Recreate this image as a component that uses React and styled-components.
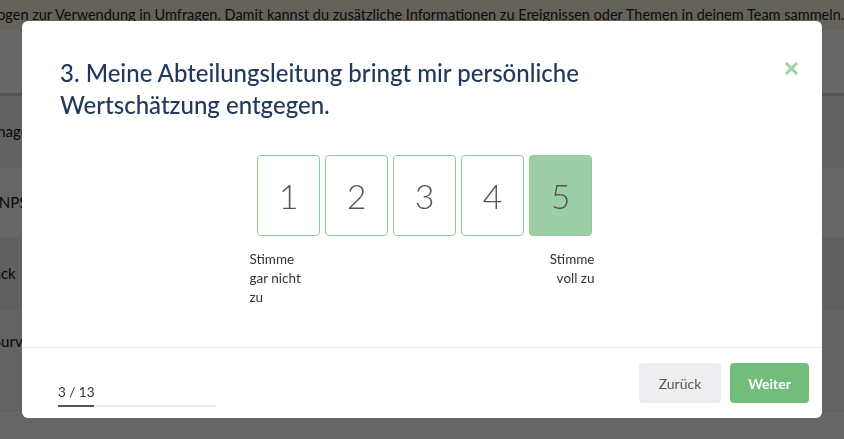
import React, { useState } from 'react'
import styled, { createGlobalStyle } from 'styled-components'

const GlobalStyle = createGlobalStyle`
  *, *::before, *::after {
    box-sizing: border-box;
  }
  html, body {
    margin: 0;
    padding: 0;
    height: 100%;
    overflow: hidden;
  }
  body {
    font-family: Lato, "Noto Sans", sans-serif;
    background: #fff;
  }
`;

const rows = [
  { label: 'Management', shift: -24 },
  { label: 'eNPS', shift: -9 },
  { label: 'Feedback', shift: -47 },
  { label: 'Pulse Survey', shift: -46 },
]

const App = () => {
  const [value, setValue] = useState(5)
  const step = 3
  const total = 13

  return (
    <>
      <GlobalStyle />
      <Page>
        <Banner>
          <span>Fragebogen zur Verwendung in Umfragen. Damit kannst du zusätzliche Informationen zu Ereignissen oder Themen in deinem Team sammeln.</span>
        </Banner>
        <TableHead />
        {rows.map((r, i) => (
          <Row key={r.label} shade={i}>
            <RowLabel shift={r.shift}>{r.label}</RowLabel>
          </Row>
        ))}
      </Page>

      <Overlay>
        <Modal>
          <Header>
            <Title>3. Meine Abteilungsleitung bringt mir persönliche Wertschätzung entgegen.</Title>
            <CloseButton aria-label="close">
              <svg width="13" height="13" viewBox="0 0 13 13">
                <path d="M2 2 L11 11 M11 2 L2 11" stroke="#9dd1a6" strokeWidth="3" strokeLinecap="square" />
              </svg>
            </CloseButton>
          </Header>

          <Body>
            <Scale>
              {[1, 2, 3, 4, 5].map((n) => (
                <Option key={n} type="button" selected={value === n} onClick={() => setValue(n)}>
                  {n}
                </Option>
              ))}
            </Scale>
            <Labels>
              <ScaleLabel>Stimme gar nicht zu</ScaleLabel>
              <ScaleLabel align="right">Stimme voll zu</ScaleLabel>
            </Labels>
          </Body>

          <Footer>
            <Progress>
              <span>{step} / {total}</span>
              <Track>
                <Fill style={{ width: `${(step / total) * 100}%` }} />
              </Track>
            </Progress>
            <Actions>
              <Button type="button">Zurück</Button>
              <Button type="button" primary>Weiter</Button>
            </Actions>
          </Footer>
        </Modal>
      </Overlay>
    </>
  )
}

const Page = styled.div`
  width: 844px;
  height: 439px;
  background: #fff;
  overflow: hidden;
`;

const Banner = styled.div`
  height: 30px;
  background: #fdf4e0;
  color: #222;
  font-size: 14.5px;
  line-height: 30px;
  white-space: nowrap;
  overflow: hidden;
  text-indent: -46px;
`;

const TableHead = styled.div`
  height: 66px;
  border-bottom: 3px solid #d2d2d2;
`;

const Row = styled.div`
  height: 71px;
  border-bottom: 1px solid #eaeaea;
  background: ${(p) => ['#f6f6f6', '#ffffff', '#f0f0f0', '#f8f8f8'][p.shade]};
  display: flex;
  align-items: center;
  overflow: hidden;
  &:last-child {
    height: 102px;
    align-items: flex-start;
    padding-top: 23px;
  }
`;

const RowLabel = styled.div`
  font-size: 15px;
  color: #111;
  white-space: nowrap;
  margin-left: ${(p) => p.shift}px;
`;

const Overlay = styled.div`
  position: fixed;
  inset: 0;
  background: rgba(0, 0, 0, 0.6);
  display: flex;
  justify-content: center;
  align-items: flex-start;
  padding-top: 21px;
`;

const Modal = styled.div`
  width: 800px;
  height: 397px;
  background: #fff;
  border-radius: 6px;
  display: flex;
  flex-direction: column;
  overflow: hidden;
`;

const Header = styled.div`
  display: flex;
  justify-content: space-between;
  align-items: flex-start;
  padding: 36px 24px 0 38px;
`;

const Title = styled.h2`
  margin: 0;
  max-width: 660px;
  font-size: 24px;
  font-weight: 500;
  line-height: 32px;
  color: #22395b;
`;

const CloseButton = styled.button`
  border: none;
  background: transparent;
  padding: 0;
  margin-top: 5px;
  cursor: pointer;
  display: flex;
`;

const Body = styled.div`
  flex: 1;
  display: flex;
  flex-direction: column;
  align-items: center;
  padding-top: 34px;
`;

const Scale = styled.div`
  display: flex;
  gap: 5px;
  margin-left: 5px;
`;

const Option = styled.button`
  width: 63px;
  height: 81px;
  border: 1px solid #8ecb98;
  border-radius: 4px;
  outline: none;
  background: ${(p) => (p.selected ? '#9dcfa6' : '#fff')};
  color: #555;
  font-family: Lato, "Noto Sans", sans-serif;
  font-size: 34px;
  font-weight: 300;
  cursor: pointer;
  padding: 0;
`;

const Labels = styled.div`
  width: 345px;
  display: flex;
  justify-content: space-between;
  margin-top: 14px;
`;

const ScaleLabel = styled.div`
  width: 60px;
  font-size: 13.5px;
  line-height: 19px;
  color: #333;
  text-align: ${(p) => p.align || 'left'};
`;

const Footer = styled.div`
  height: 71px;
  border-top: 1px solid #ececec;
  display: flex;
  justify-content: space-between;
  align-items: flex-start;
  padding: 15px 13px 0 36px;
`;

const Progress = styled.div`
  width: 158px;
  margin-top: 19px;
  font-size: 13.5px;
  color: #333;
  line-height: 20px;
`;

const Track = styled.div`
  height: 2px;
  background: #eeeeee;
  margin-top: 3px;
`;

const Fill = styled.div`
  height: 100%;
  background: #555;
`;

const Actions = styled.div`
  display: flex;
  gap: 9px;
`;

const Button = styled.button`
  height: 40px;
  min-width: ${(p) => (p.primary ? '79px' : '82px')};
  border: none;
  border-radius: 4px;
  padding: 0 14px;
  background: ${(p) => (p.primary ? '#72bd7c' : '#eeeef0')};
  color: ${(p) => (p.primary ? '#fff' : '#555')};
  font-family: Lato, "Noto Sans", sans-serif;
  font-size: 14px;
  font-weight: ${(p) => (p.primary ? 700 : 400)};
  cursor: pointer;
`;

export default App
